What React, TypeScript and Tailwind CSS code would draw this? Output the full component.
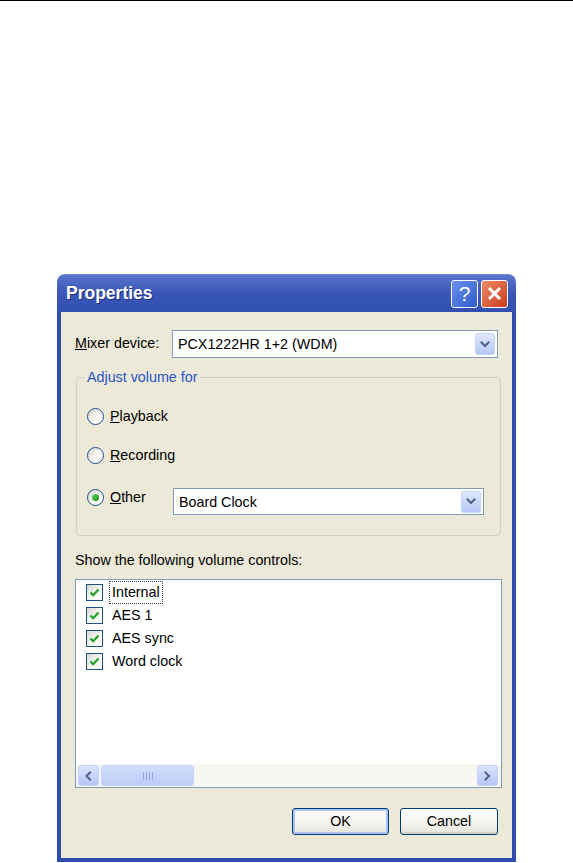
import React from 'react';

const Chevron = ({ dir = 'down' }: { dir?: 'down' | 'left' | 'right' }) => {
  const d =
    dir === 'down' ? 'M1.5 1.5 L5 5 L8.5 1.5' : dir === 'left' ? 'M5 1.5 L1.5 5 L5 8.5' : 'M1.5 1.5 L5 5 L1.5 8.5';
  const w = dir === 'down' ? 10 : 7;
  const h = dir === 'down' ? 7 : 10;
  return (
    <svg width={w} height={h} viewBox={`0 0 ${w} ${h}`}>
      <path d={d} fill="none" stroke="#4d6185" strokeWidth="2" strokeLinecap="square" />
    </svg>
  );
};

const ComboBox = ({ value, className = '' }: { value: string; className?: string }) => (
  <div className={`flex items-center bg-white border border-[#7f9db9] pl-[5px] pr-[2px] ${className}`}>
    <span className="flex-1 text-[14.3px] leading-[16px] text-black">{value}</span>
    <span className="w-[20px] h-[22px] rounded-[3px] border border-[#c3d3fd] bg-gradient-to-b from-[#e1e9fe] to-[#b4c6f5] flex items-center justify-center">
      <Chevron />
    </span>
  </div>
);

const Radio = ({ checked, children }: { checked?: boolean; children: React.ReactNode }) => (
  <div className="flex items-center gap-[6px] h-[18px]">
    <span className="w-[17px] h-[17px] rounded-full border border-[#1c5180] bg-gradient-to-br from-[#d8d8d2] via-[#f4f4f0] to-white flex items-center justify-center">
      {checked && <span className="w-[7px] h-[7px] rounded-full bg-gradient-to-br from-[#5fd35f] to-[#1a8f1a]" />}
    </span>
    <span className="text-[14.3px] leading-[16px] text-black">{children}</span>
  </div>
);

const CheckRow = ({ label, focused }: { label: string; focused?: boolean }) => (
  <div className="flex items-center h-[23px] pl-[10px]">
    <span className="w-[17px] h-[17px] border border-[#1c5180] bg-gradient-to-br from-[#d8d8d2] via-[#f4f4f0] to-white flex items-center justify-center">
      <svg width="13" height="13" viewBox="0 0 13 13">
        <path d="M2.5 6.5 L5.2 9.2 L10.5 3.5" fill="none" stroke="#21a121" strokeWidth="2.2" />
      </svg>
    </span>
    <span
      className={`ml-[6px] h-[23px] px-[2px] flex items-center text-[14.3px] text-black border border-dotted ${
        focused ? 'border-[#444]' : 'border-transparent'
      }`}
    >
      {label}
    </span>
  </div>
);

const XpButton = ({ label, isDefault, className = '' }: { label: string; isDefault?: boolean; className?: string }) => (
  <button
    className={`h-[27px] rounded-[3px] border border-[#003c74] bg-gradient-to-b from-white via-[#f6f5f1] to-[#e3e2db] text-[14.3px] text-black ${
      isDefault ? 'shadow-[inset_0_0_0_2px_#a9c2f0]' : 'shadow-[inset_0_-2px_0_#d6d0c5]'
    } ${className}`}
  >
    {label}
  </button>
);

export default function App() {
  return (
    <div className="min-h-[863px] bg-white font-['Liberation_Sans',Arial,sans-serif]">
      <div className="h-px bg-black" />

      <div className="ml-[57px] mt-[273px] w-[459px] flex flex-col">
        {/* Title bar */}
        <div className="h-[38px] rounded-t-[8px] bg-gradient-to-b from-[#5874cc] via-[#3a57b8] to-[#3250b0] flex items-center pl-[9px] pr-[8px] border-t border-[#6a86d6]">
          <span className="flex-1 text-white font-bold text-[17.5px] [text-shadow:1px_1px_0_#1c2f78]">Properties</span>
          <div className="flex gap-[3px]">
            <span className="w-[27px] h-[28px] rounded-[3px] border border-white bg-gradient-to-br from-[#6c92ee] to-[#2f5bcb] flex items-center justify-center text-white text-[21px] leading-none">
              ?
            </span>
            <span className="w-[27px] h-[28px] rounded-[3px] border border-white bg-gradient-to-br from-[#ee8a68] to-[#c9391b] flex items-center justify-center">
              <svg width="15" height="15" viewBox="0 0 15 15">
                <path d="M2 2 L13 13 M13 2 L2 13" stroke="white" strokeWidth="3" />
              </svg>
            </span>
          </div>
        </div>

        {/* Body */}
        <div className="bg-[#ece9d8] border-x-4 border-b-4 border-[#2f4cb0] px-[14px] pb-[23px] flex flex-col">
          <div className="mt-[18px] flex items-center">
            <span className="w-[97px] text-[14.3px] text-black">
              <u>M</u>ixer device:
            </span>
            <ComboBox value="PCX1222HR 1+2 (WDM)" className="w-[326px] h-[28px]" />
          </div>

          <fieldset className="mt-[11px] ml-px w-[425px] border border-[#d0d0bf] rounded-[4px] pl-[10px] pr-[16px] pb-[20px]">
            <legend className="-ml-[3px] px-[3px] text-[14.3px] leading-[16px] text-[#2b54c4]">Adjust volume for</legend>
            <div className="mt-[22px]">
              <Radio>
                <u>P</u>layback
              </Radio>
            </div>
            <div className="mt-[21px]">
              <Radio>
                <u>R</u>ecording
              </Radio>
            </div>
            <div className="mt-[24px] flex items-start">
              <div className="w-[86px]">
                <Radio checked>
                  <u>O</u>ther
                </Radio>
              </div>
              <ComboBox value="Board Clock" className="w-[311px] h-[27px]" />
            </div>
          </fieldset>

          <div className="mt-[16px] text-[14.3px] leading-[16px] text-black">Show the following volume controls:</div>

          <div className="mt-[11px] w-[427px] h-[209px] bg-white border border-[#7f9db9] flex flex-col">
            <div className="pt-[1px] flex-1">
              <CheckRow label="Internal" focused />
              <CheckRow label="AES 1" />
              <CheckRow label="AES sync" />
              <CheckRow label="Word clock" />
            </div>
            <div className="h-[23px] bg-[#f7f6f1] flex items-center pl-[2px] pr-[3px]">
              <span className="w-[21px] h-[21px] rounded-[3px] border border-[#c3d3fd] bg-gradient-to-b from-[#dbe4fd] to-[#b4c6f5] flex items-center justify-center">
                <Chevron dir="left" />
              </span>
              <span className="ml-[2px] w-[93px] h-[21px] rounded-[3px] border border-[#c3d3fd] bg-gradient-to-b from-[#d3defc] to-[#bccdf6] flex items-center justify-center gap-[2px]">
                <span className="w-px h-[8px] bg-[#8ea6e6]" />
                <span className="w-px h-[8px] bg-[#8ea6e6]" />
                <span className="w-px h-[8px] bg-[#8ea6e6]" />
                <span className="w-px h-[8px] bg-[#8ea6e6]" />
              </span>
              <span className="flex-1" />
              <span className="w-[21px] h-[21px] rounded-[3px] border border-[#c3d3fd] bg-gradient-to-b from-[#dbe4fd] to-[#b4c6f5] flex items-center justify-center">
                <Chevron dir="right" />
              </span>
            </div>
          </div>

          <div className="mt-[20px] flex justify-end gap-[11px]">
            <XpButton label="OK" isDefault className="w-[97px]" />
            <XpButton label="Cancel" className="w-[98px]" />
          </div>
        </div>
      </div>
    </div>
  );
}
